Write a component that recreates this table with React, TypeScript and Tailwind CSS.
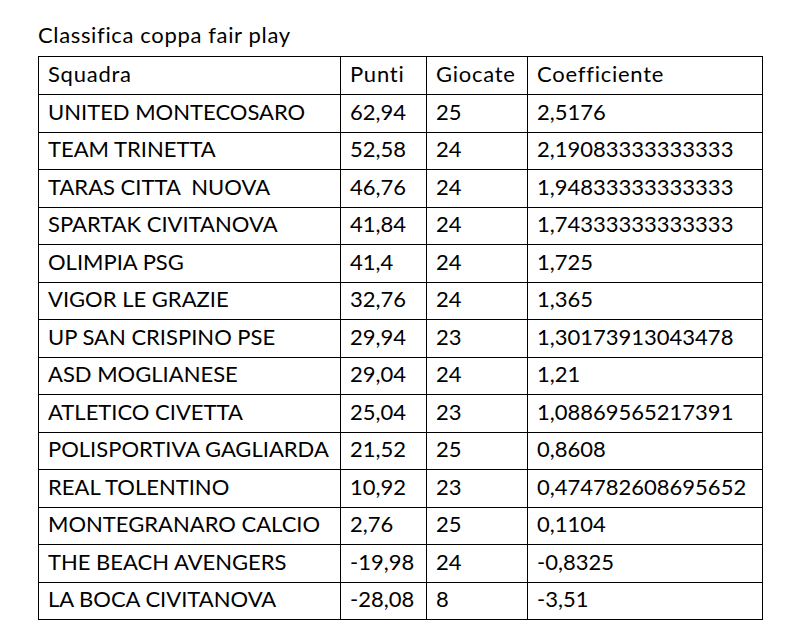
import React from "react";

const rows: [string, string, string, string][] = [
  ["UNITED MONTECOSARO", "62,94", "25", "2,5176"],
  ["TEAM TRINETTA", "52,58", "24", "2,19083333333333"],
  ["TARAS CITTA  NUOVA", "46,76", "24", "1,94833333333333"],
  ["SPARTAK CIVITANOVA", "41,84", "24", "1,74333333333333"],
  ["OLIMPIA PSG", "41,4", "24", "1,725"],
  ["VIGOR LE GRAZIE", "32,76", "24", "1,365"],
  ["UP SAN CRISPINO PSE", "29,94", "23", "1,30173913043478"],
  ["ASD MOGLIANESE", "29,04", "24", "1,21"],
  ["ATLETICO CIVETTA", "25,04", "23", "1,08869565217391"],
  ["POLISPORTIVA GAGLIARDA", "21,52", "25", "0,8608"],
  ["REAL TOLENTINO", "10,92", "23", "0,474782608695652"],
  ["MONTEGRANARO CALCIO", "2,76", "25", "0,1104"],
  ["THE BEACH AVENGERS", "-19,98", "24", "-0,8325"],
  ["LA BOCA CIVITANOVA", "-28,08", "8", "-3,51"],
];

const cell = "border border-black pl-[9px] pr-0 pb-[3px] pt-0 align-middle whitespace-pre";

const App = () => {
  return (
    <div
      className="w-[799px] h-[637px] bg-white text-black overflow-hidden"
      style={{ fontFamily: 'Lato, "Open Sans", sans-serif' }}
    >
      <div className="pl-[38px] pt-[20px] text-[22px] leading-[30px] tracking-[0.65px]">
        Classifica coppa fair play
      </div>
      <table className="ml-[38px] mt-[6px] border-collapse table-fixed w-[724px] text-[22px] leading-none">
        <colgroup>
          <col className="w-[302px]" />
          <col className="w-[86px]" />
          <col className="w-[101px]" />
          <col className="w-[235px]" />
        </colgroup>
        <tbody>
          <tr className="h-[38px] tracking-[0.75px]">
            <td className={cell}>Squadra</td>
            <td className={cell}>Punti</td>
            <td className={cell}>Giocate</td>
            <td className={cell}>Coefficiente</td>
          </tr>
          {rows.map((r) => (
            <tr key={r[0]} className="h-[37.5px]">
              {r.map((v, i) => (
                <td key={i} className={cell}>
                  {v}
                </td>
              ))}
            </tr>
          ))}
        </tbody>
      </table>
    </div>
  );
};

export default App;
